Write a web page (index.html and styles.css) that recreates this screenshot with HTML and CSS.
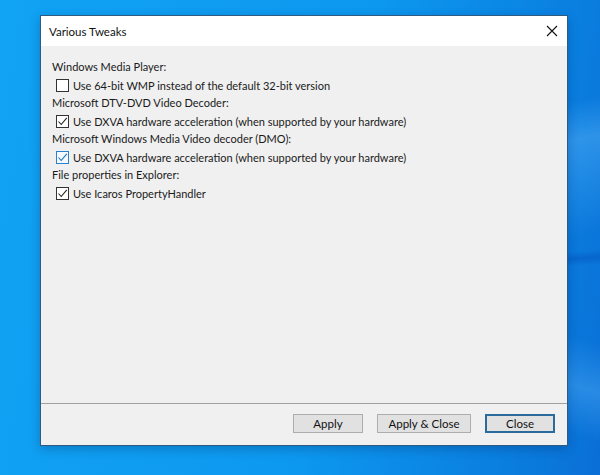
FILE: index.html
```html
<!DOCTYPE html>
<html>

<head>
	<title>Various Tweaks</title>
	<link rel="stylesheet" href="styles.css">
</head>

<body>
	<div class="desktop">
		<div class="window">
			<div class="title-bar">
				<span class="title">Various Tweaks</span>
				<svg class="close-icon" width="12" height="12" viewBox="0 0 12 12">
					<path d="M1 1L11 11M11 1L1 11" stroke="#111" stroke-width="1.1" fill="none" />
				</svg>
			</div>

			<div class="window-body">
				<div class="options">
					<div class="group-label">Windows Media Player:</div>
					<label class="option">
						<span class="box"></span>
						Use 64-bit WMP instead of the default 32-bit version
					</label>

					<div class="group-label">Microsoft DTV-DVD Video Decoder:</div>
					<label class="option">
						<span class="box checked">
							<svg width="11" height="11" viewBox="0 0 11 11"><path d="M1.5 5.5L4.2 8.5L9.8 1.8" stroke="#222" stroke-width="1.1" fill="none" /></svg>
						</span>
						Use DXVA hardware acceleration (when supported by your hardware)
					</label>

					<div class="group-label">Microsoft Windows Media Video decoder (DMO):</div>
					<label class="option">
						<span class="box checked hover">
							<svg width="11" height="11" viewBox="0 0 11 11"><path d="M1.5 5.5L4.2 8.5L9.8 1.8" stroke="#1a6fb8" stroke-width="1.1" fill="none" /></svg>
						</span>
						Use DXVA hardware acceleration (when supported by your hardware)
					</label>

					<div class="group-label">File properties in Explorer:</div>
					<label class="option">
						<span class="box checked">
							<svg width="11" height="11" viewBox="0 0 11 11"><path d="M1.5 5.5L4.2 8.5L9.8 1.8" stroke="#222" stroke-width="1.1" fill="none" /></svg>
						</span>
						Use Icaros PropertyHandler
					</label>
				</div>

				<div class="footer">
					<button class="btn btn-apply">Apply</button>
					<button class="btn btn-apply-close">Apply &amp; Close</button>
					<button class="btn btn-close">Close</button>
				</div>
			</div>
		</div>
	</div>
</body>

</html>
```

FILE: styles.css
```css
body {
	margin: 0;
	font-family: Lato, "Noto Sans", sans-serif;
	font-size: 11px;
	color: #1a1a1a;
}

.desktop {
	width: 600px;
	height: 475px;
	box-sizing: border-box;
	padding: 15px 0 0 40px;
	overflow: hidden;
	background:
		linear-gradient(176deg, transparent 0 53%, rgba(0, 70, 180, 0.35) 54.5%, transparent 56%) right top / 60px 475px no-repeat,
		linear-gradient(170deg, transparent 0 22%, rgba(110, 195, 255, 0.35) 30%, transparent 50%) right top / 60px 475px no-repeat,
		linear-gradient(195deg, transparent 0 70%, rgba(110, 195, 255, 0.3) 80%, transparent 90%) right top / 60px 475px no-repeat,
		linear-gradient(100deg, #11a3f4 0%, #0d98ef 55%, #0a7fe0 85%, #0a6fd6 100%);
}

.window {
	width: 528px;
	height: 431px;
	box-sizing: border-box;
	border: 1px solid #2f5b80;
	background: #f0f0f0;
	display: flex;
	flex-direction: column;
	box-shadow: 0 3px 10px rgba(0, 40, 90, 0.3);
}

.title-bar {
	height: 30px;
	background: #ffffff;
	display: flex;
	align-items: center;
	justify-content: space-between;
	padding: 0 9px 0 8px;
	flex-shrink: 0;
}

.title {
	font-size: 11.5px;
	color: #111;
}

.window-body {
	flex: 1;
	display: flex;
	flex-direction: column;
}

.options {
	flex: 1;
	padding: 12px 11px 0 11px;
}

.group-label {
	height: 18px;
	line-height: 18px;
}

.option {
	height: 18px;
	display: flex;
	align-items: center;
	gap: 4px;
	padding-left: 4px;
}

.box {
	width: 13px;
	height: 13px;
	box-sizing: border-box;
	border: 1px solid #333;
	background: #fff;
	display: flex;
	align-items: center;
	justify-content: center;
}

.box.hover {
	border-color: #2a7fd0;
	background: #f3f9ff;
}

.footer {
	border-top: 1px solid #a0a0a0;
	display: flex;
	justify-content: flex-end;
	gap: 14px;
	padding: 10px 12px 12px 0;
}

.btn {
	height: 19px;
	box-sizing: border-box;
	padding: 0;
	font-family: inherit;
	font-size: 11.5px;
	color: #111;
	background: #e1e1e1;
	border: 1px solid #adadad;
	line-height: 15px;
}

.btn-apply,
.btn-close {
	width: 70px;
}

.btn-apply-close {
	width: 94px;
}

.btn-close {
	border: 2px solid #2b6b9b;
	line-height: 13px;
}
```
